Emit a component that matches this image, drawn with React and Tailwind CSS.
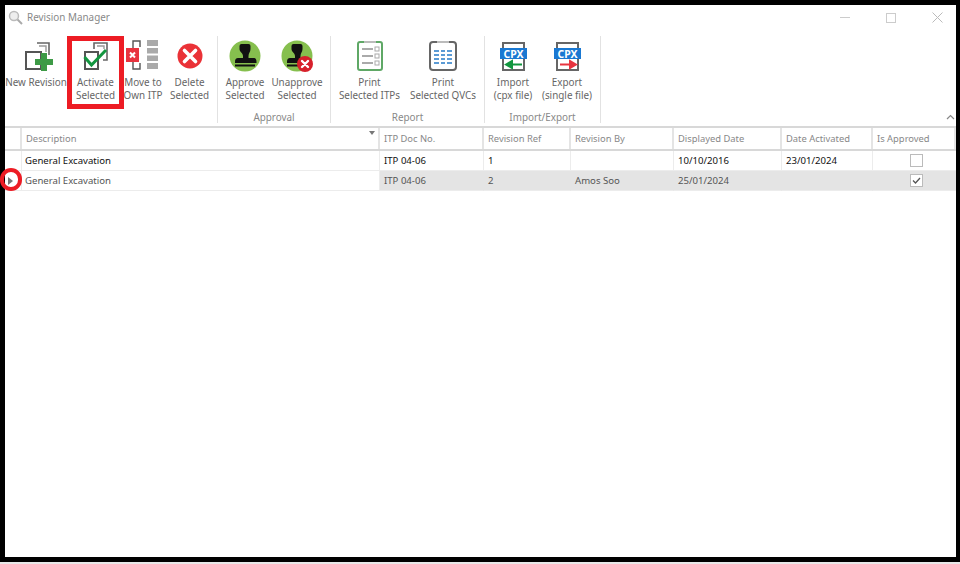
const font = { fontFamily: '"Noto Sans", sans-serif' }

function NewRevisionIcon() {
  return (
    <svg width="32" height="32" viewBox="0 0 32 32" fill="none" className="overflow-visible">
      <path d="M17 3h12v12" stroke="#666" strokeWidth="1.6" />
      <path d="M19 6h7v6" stroke="#999" strokeWidth="1.4" />
      <rect x="6" y="12" width="15" height="17" stroke="#555" strokeWidth="2" />
      <path d="M21 13h6v6h6v6h-6v6h-6v-6h-6v-6h6z" fill="#3d9a46" />
    </svg>
  )
}

function ActivateIcon() {
  return (
    <svg width="32" height="32" viewBox="0 0 32 32" fill="none">
      <path d="M14 9V3h13v17h-4" stroke="#666" strokeWidth="1.6" />
      <path d="M17 6h7v3" stroke="#999" strokeWidth="1.4" />
      <rect x="5" y="12" width="13" height="17" stroke="#555" strokeWidth="2" />
      <path d="M4.5 17l7 8L26 10" stroke="#12963f" strokeWidth="3" />
    </svg>
  )
}

function MoveIcon() {
  return (
    <svg width="34" height="32" viewBox="0 0 34 32" fill="none">
      <path d="M14 7V1H7v7M14 23v6H7v-7" stroke="#555" strokeWidth="1.4" />
      <rect x="21" y="0" width="11" height="6" fill="#aaa" />
      <rect x="21" y="8" width="11" height="5.5" fill="#aaa" />
      <rect x="21" y="15.5" width="11" height="5.5" fill="#aaa" />
      <rect x="21" y="23" width="11" height="6" fill="#aaa" />
      <rect x="0" y="8" width="13" height="14" fill="#e8343f" />
      <path d="M4 12.5l5 5M9 12.5l-5 5" stroke="#fff" strokeWidth="2" />
    </svg>
  )
}

function DeleteIcon() {
  return (
    <svg width="32" height="32" viewBox="0 0 32 32" fill="none">
      <circle cx="16" cy="16" r="12.5" fill="#ea3237" />
      <path d="M10.5 10.5l11 11M21.5 10.5l-11 11" stroke="#fff" strokeWidth="3.6" strokeLinecap="round" />
    </svg>
  )
}

function StampIcon({ badge }) {
  return (
    <svg width="32" height="32" viewBox="0 0 32 32" fill="none">
      <circle cx="16" cy="16" r="15.5" fill="#86bf4e" />
      <path d="M10.5 6q0-2 2-2h7q2 0 2 2v3c0 3-2 4-2 7v2h5c2 0 3 1 3 4v1H6v-1c0-3 1-4 3-4h5v-2c0-3-3.500-4-3.500-7z" fill="#111" />
      <rect x="6" y="24.5" width="20" height="2" fill="#111" />
      {badge && (
        <>
          <circle cx="24" cy="24" r="8" fill="#d7202b" />
          <path d="M21 21l6 6M27 21l-6 6" stroke="#fff" strokeWidth="2.4" strokeLinecap="round" />
        </>
      )}
    </svg>
  )
}

function PrintItpIcon() {
  return (
    <svg width="32" height="32" viewBox="0 0 32 32" fill="none">
      <rect x="4" y="2" width="24" height="28" rx="2" fill="#fff" stroke="#5fa866" strokeWidth="2" />
      <path d="M10 2h12" stroke="#bbb" strokeWidth="2" />
      {[9, 16, 23].map(y => (
        <g key={y}>
          <path d={`M8 ${y}h11`} stroke="#aaa" strokeWidth="2" />
          <rect x="21" y={y - 2} width="4" height="4" stroke="#aaa" />
        </g>
      ))}
    </svg>
  )
}

function PrintQvcIcon() {
  return (
    <svg width="32" height="32" viewBox="0 0 32 32" fill="none">
      <rect x="3" y="2" width="26" height="28" rx="3" fill="#fff" stroke="#666" strokeWidth="2" />
      <path d="M10 2h12" stroke="#bbb" strokeWidth="2" />
      {[11, 15, 19, 23].map(y => (
        <path key={y} d={`M7 ${y}h5M14 ${y}h4M20 ${y}h5`} stroke="#5b9bd5" strokeWidth="2" />
      ))}
    </svg>
  )
}

function CpxIcon({ color, dir }) {
  return (
    <svg width="32" height="32" viewBox="0 0 32 32" fill="none">
      <rect x="6" y="3" width="21" height="27" fill="#fff" stroke="#666" strokeWidth="2" />
      <rect x="3" y="8" width="27" height="11" fill="#1a78d2" />
      <text x="16.5" y="17.5" textAnchor="middle" fill="#fff" fontSize="10.5" fontWeight="700" style={font}>CPX</text>
      {dir === 'left' ? (
        <path d="M25 24.5H13M9 24.5l6-3.5v7z" stroke={color} fill={color} strokeWidth="2" />
      ) : (
        <path d="M9 24.5h12M25 24.5l-6-3.5v7z" stroke={color} fill={color} strokeWidth="2" />
      )}
    </svg>
  )
}

function RibbonButton({ icon, lines, width }) {
  return (
    <div className={`flex flex-col items-center shrink-0 ${width}`}>
      <div className="h-8 flex items-center justify-center">{icon}</div>
      <div className="mt-[4px] text-[9.9px] leading-[13px] text-[#666] text-center whitespace-nowrap">
        {lines.map(l => <div key={l}>{l}</div>)}
      </div>
    </div>
  )
}

function RibbonGroup({ label, width, children }) {
  return (
    <div className={`flex flex-col shrink-0 border-r border-[#e2e2e2] h-[87px] ${width}`}>
      <div className="flex flex-1 pt-[4px]">{children}</div>
      <div className="h-[12px] text-[9.9px] leading-[12px] text-[#888] text-center">{label}</div>
    </div>
  )
}

const columns = 'grid grid-cols-[17px_358px_104px_87px_103px_108px_91px_83px]'

const headers = ['Description', 'ITP Doc No.', 'Revision Ref', 'Revision By', 'Displayed Date', 'Date Activated', 'Is Approved']

function HeaderCell({ children, sort }) {
  return (
    <div className="relative flex items-center h-[21px] pl-[4px] pt-[1px] text-[9.4px] text-[#888] border-r-2 border-[#e4e4e4]">
      {children}
      {sort && <span className="absolute right-[3px] top-[3px] w-0 h-0 border-x-[3px] border-t-[4px] border-x-transparent border-t-[#777]" />}
    </div>
  )
}

function Cell({ children, shaded, dark, pad = 'pl-[4px]' }) {
  return (
    <div className={`flex items-center h-[20px] pt-[1px] text-[9.6px] border-b border-r border-[#ececec] ${pad} ${shaded ? 'bg-[#e4e4e4] border-r-[#e4e4e4]' : 'bg-white'} ${dark ? 'text-[#111]' : 'text-[#555]'}`}>
      {children}
    </div>
  )
}

function CheckCell({ checked, shaded }) {
  return (
    <div className={`flex items-center justify-center h-[20px] pl-[4px] border-b border-[#ececec] ${shaded ? 'bg-[#e4e4e4]' : 'bg-white'}`}>
      <span className="flex items-center justify-center w-[13px] h-[13px] bg-white border border-[#bbb]">
        {checked && (
          <svg width="9" height="9" viewBox="0 0 9 9" fill="none">
            <path d="M1 4.5l2.5 2.5L8 2" stroke="#555" strokeWidth="1.3" />
          </svg>
        )}
      </span>
    </div>
  )
}

export default function App() {
  return (
    <div className="relative w-[960px] h-[564px] overflow-hidden bg-[#e8e8e8]" style={font}>
      <div className="h-[562px] bg-white border-solid border-black border-t-[5px] border-l-[5px] border-r-[4px] border-b-[5px] flex flex-col">
        {/* Title bar */}
        <div className="flex items-center h-[25px] shrink-0">
          <svg className="ml-[3px]" width="15" height="15" viewBox="0 0 15 15" fill="none">
            <circle cx="6" cy="6" r="4.5" stroke="#bbb" strokeWidth="1.5" fill="#eee" />
            <path d="M9.5 9.5l4.5 4.5" stroke="#aaa" strokeWidth="2" />
          </svg>
          <span className="ml-[4px] text-[9.9px] text-[#888]">Revision Manager</span>
          <div className="ml-auto flex items-center gap-[36px] pr-[13px]">
            <span className="w-[10px] h-px bg-[#ccc]" />
            <span className="w-[10px] h-[10px] border border-[#ccc]" />
            <svg width="11" height="11" viewBox="0 0 11 11" fill="none">
              <path d="M.5.5l10 10M10.5.5l-10 10" stroke="#bbb" />
            </svg>
          </div>
        </div>

        {/* Ribbon */}
        <div className="relative flex h-[98px] shrink-0 pt-[6px] border-b-2 border-[#d8d8d8]">
          <RibbonGroup width="w-[213px]">
            <RibbonButton width="w-[62px]" icon={<NewRevisionIcon />} lines={['New Revision']} />
            <RibbonButton width="w-[57px]" icon={<ActivateIcon />} lines={['Activate', 'Selected']} />
            <RibbonButton width="w-[38px]" icon={<MoveIcon />} lines={['Move to', 'Own ITP']} />
            <RibbonButton width="w-[55px]" icon={<DeleteIcon />} lines={['Delete', 'Selected']} />
          </RibbonGroup>
          <RibbonGroup width="w-[113px]" label="Approval">
            <RibbonButton width="w-[54px]" icon={<StampIcon />} lines={['Approve', 'Selected']} />
            <RibbonButton width="w-[50px]" icon={<StampIcon badge />} lines={['Unapprove', 'Selected']} />
          </RibbonGroup>
          <RibbonGroup width="w-[154px]" label="Report">
            <RibbonButton width="w-[77px]" icon={<PrintItpIcon />} lines={['Print', 'Selected ITPs']} />
            <RibbonButton width="w-[70px]" icon={<PrintQvcIcon />} lines={['Print', 'Selected QVCs']} />
          </RibbonGroup>
          <RibbonGroup width="w-[116px]" label="Import/Export">
            <RibbonButton width="w-[56px]" icon={<CpxIcon color="#12963f" dir="left" />} lines={['Import', '(cpx file)']} />
            <RibbonButton width="w-[52px]" icon={<CpxIcon color="#e8343f" dir="right" />} lines={['Export', '(single file)']} />
          </RibbonGroup>
          <svg className="absolute right-[1px] bottom-[6px]" width="9" height="6" viewBox="0 0 9 6" fill="none">
            <path d="M1 5l3.5-3.5L8 5" stroke="#888" strokeWidth="1.2" />
          </svg>
        </div>

        {/* Grid */}
        <div className={`${columns} shrink-0 border-b-2 border-[#d8d8d8]`}>
          <HeaderCell />
          {headers.map((h, i) => <HeaderCell key={h} sort={i === 0}>{h}</HeaderCell>)}
        </div>
        <div className={`${columns} shrink-0`}>
          <Cell />
          <Cell dark pad="pl-[3px]">General Excavation</Cell>
          <Cell dark>ITP 04-06</Cell>
          <Cell dark>1</Cell>
          <Cell dark />
          <Cell dark>10/10/2016</Cell>
          <Cell dark>23/01/2024</Cell>
          <CheckCell />
        </div>
        <div className={`${columns} shrink-0`}>
          <Cell pad="pl-[3px]">
            <span className="w-0 h-0 border-y-[4px] border-l-[5px] border-y-transparent border-l-[#777]" />
          </Cell>
          <Cell pad="pl-[3px]">General Excavation</Cell>
          <Cell shaded>ITP 04-06</Cell>
          <Cell shaded>2</Cell>
          <Cell shaded>Amos Soo</Cell>
          <Cell shaded>25/01/2024</Cell>
          <Cell shaded />
          <CheckCell checked shaded />
        </div>
      </div>

      {/* Red annotations */}
      <div className="absolute left-[67px] top-[36px] w-[57px] h-[73px] border-[5px] border-[#ed1c24]" />
      <div className="absolute left-0 top-[168px] w-[22px] h-[23px] rounded-full border-[4px] border-[#ed1c24]" />
    </div>
  )
}
